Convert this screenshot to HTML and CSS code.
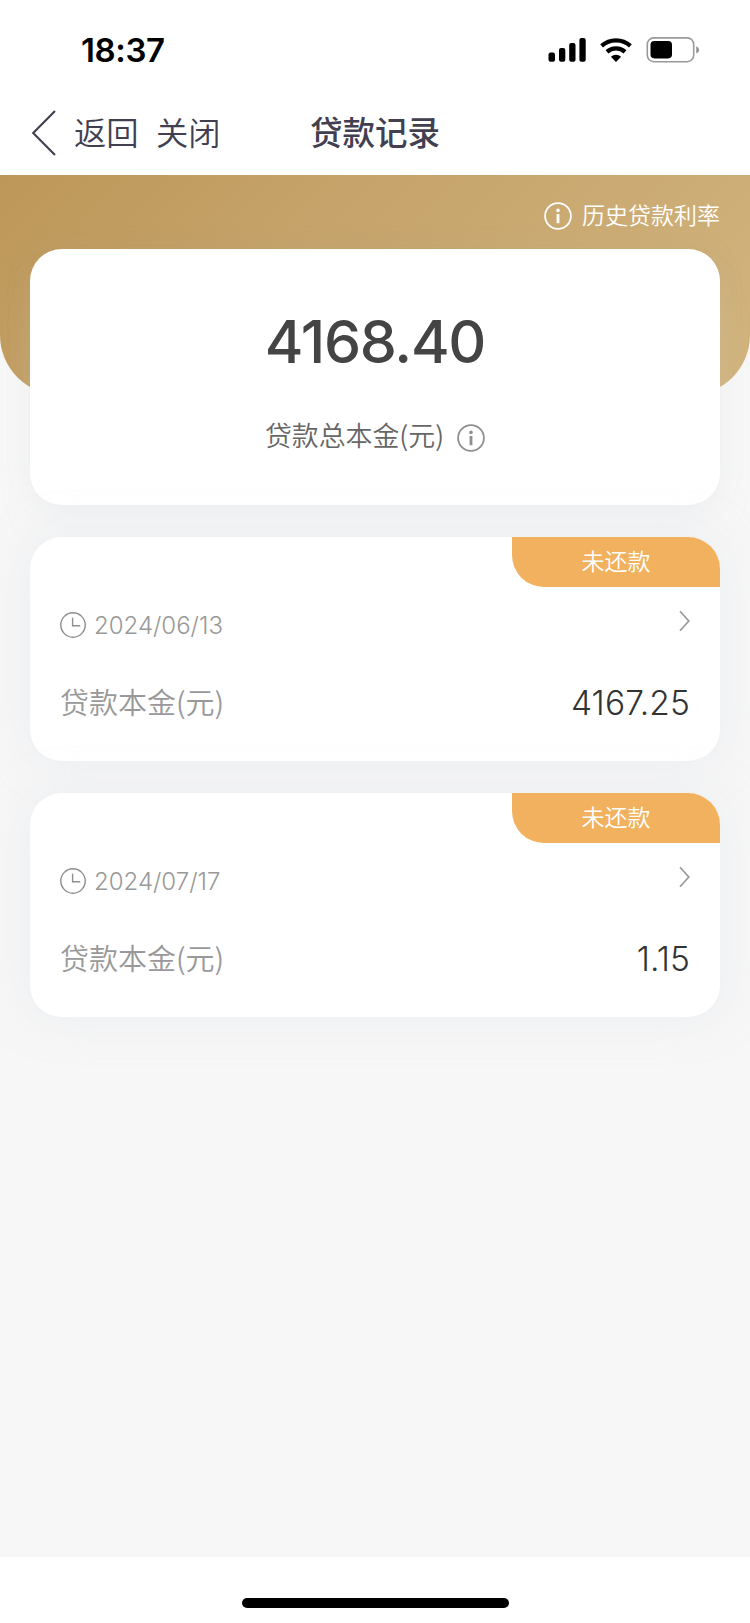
FILE: index.html
```html
<!DOCTYPE html>
<html lang="zh-CN">
<head>
<meta charset="utf-8">
<title>贷款记录</title>
<link rel="stylesheet" href="styles.css">
</head>
<body>
<header class="status">
  <span class="time">18:37</span>
  <svg class="status-icons" width="154" height="28" viewBox="0 0 154 28">
    <rect x="0.5" y="15.5" width="6.5" height="9.2" rx="2"/>
    <rect x="11" y="11" width="6.3" height="13.7" rx="2"/>
    <rect x="21.2" y="6" width="6.3" height="18.7" rx="2"/>
    <rect x="31.4" y="1" width="6.3" height="23.7" rx="2"/>
    <g fill="none" stroke="#000" stroke-width="4.2">
      <path d="M53.6 8.9 A21.5 21.5 0 0 1 82.4 8.9"/>
      <path d="M59 14.9 A13.5 13.5 0 0 1 77 14.9"/>
    </g>
    <path d="M68 24.9 L62.9 19.7 A7.6 7.6 0 0 1 73.1 19.7 Z"/>
    <rect x="99.3" y="0.9" width="46.4" height="23.8" rx="6.5" fill="none" stroke="#999" stroke-width="1.6"/>
    <rect x="102.5" y="4" width="21.5" height="17.4" rx="3.8"/>
    <path d="M148.3 9.2 Q151 10.2 151 12.9 Q151 15.6 148.3 16.6 Z" fill="#888"/>
  </svg>
</header>
<nav class="nav">
  <svg class="back" width="26" height="48" viewBox="0 0 26 48"><path d="M24 2 L2.2 24 L24 46"/></svg>
  <span class="nav-link">返回</span>
  <span class="nav-link">关闭</span>
  <h1 class="title">贷款记录</h1>
</nav>
<main class="content">
  <div class="banner">
    <svg class="info" width="28" height="28" viewBox="0 0 28 28"><circle class="ring" cx="14" cy="14" r="12.9"/><circle class="dot" cx="14" cy="8.4" r="1.8"/><path class="stem" d="M14 12v9.2"/></svg>
    <span>历史贷款利率</span>
  </div>
  <section class="card summary">
    <div class="total">4168.40</div>
    <div class="total-label">
      <span>贷款总本金(元)</span>
      <svg class="info" width="28" height="28" viewBox="0 0 28 28"><circle class="ring" cx="14" cy="14" r="12.9"/><circle class="dot" cx="14" cy="8.4" r="1.8"/><path class="stem" d="M14 12v9.2"/></svg>
    </div>
  </section>
  <section class="card loan">
    <div class="tag">未还款</div>
    <div class="row date-row">
      <svg class="clock" width="26" height="26" viewBox="0 0 26 26"><circle cx="13" cy="13" r="12.2"/><path d="M12.6 5.8v8h7.6"/></svg>
      <span class="date">2024/06/13</span>
      <svg class="chevron" width="11" height="22" viewBox="0 0 11 22"><path d="M1 1.2 L9.8 11 L1 20.8"/></svg>
    </div>
    <div class="row amount-row">
      <span class="label">贷款本金(元)</span>
      <span class="amount">4167.25</span>
    </div>
  </section>
  <section class="card loan">
    <div class="tag">未还款</div>
    <div class="row date-row">
      <svg class="clock" width="26" height="26" viewBox="0 0 26 26"><circle cx="13" cy="13" r="12.2"/><path d="M12.6 5.8v8h7.6"/></svg>
      <span class="date">2024/07/17</span>
      <svg class="chevron" width="11" height="22" viewBox="0 0 11 22"><path d="M1 1.2 L9.8 11 L1 20.8"/></svg>
    </div>
    <div class="row amount-row">
      <span class="label">贷款本金(元)</span>
      <span class="amount">1.15</span>
    </div>
  </section>
</main>
<footer class="home"><div class="home-bar"></div></footer>
</body>
</html>
```
FILE: styles.css
```css
* { box-sizing: border-box; }
body {
  margin: 0;
  height: 1623px;
  display: flex;
  flex-direction: column;
  overflow: hidden;
  background: #fff;
  font-family: Inter, "Noto Sans CJK SC", sans-serif;
}
svg { display: block; flex: none; }
.status {
  height: 91px;
  padding: 37px 48px 0 81px;
  display: flex;
  justify-content: space-between;
}
.time {
  font-size: 33px;
  font-weight: 600;
  line-height: 27px;
  letter-spacing: -0.4px;
}
.nav {
  position: relative;
  height: 84px;
  padding-left: 31px;
  display: flex;
  align-items: center;
  color: #424050;
}
.back { margin-right: 17px; }
.back path { fill: none; stroke: #424050; stroke-width: 2.1; }
.nav-link {
  width: 64px;
  margin-right: 18px;
  padding-top: 2px;
  font-size: 32.3px;
  font-weight: 350;
  line-height: 48px;
  white-space: nowrap;
}
.title {
  position: absolute;
  left: 0;
  right: 0;
  margin: 0;
  padding-top: 2px;
  text-align: center;
  font-size: 32.5px;
  font-weight: 500;
  line-height: 48px;
  pointer-events: none;
}
.content {
  position: relative;
  z-index: 0;
  height: 1382px;
  padding: 0 30px;
  background: #f7f7f7;
}
.content::before {
  content: "";
  position: absolute;
  z-index: -1;
  top: 0;
  left: 0;
  width: 100%;
  height: 220px;
  border-radius: 0 0 60px 60px;
  background: linear-gradient(135deg, #bd9759 0%, #c6a46b 40%, #d2b47e 100%);
}
.banner {
  height: 74px;
  padding-top: 8px;
  display: flex;
  align-items: center;
  justify-content: flex-end;
  gap: 10px;
  color: #fff;
  font-size: 23px;
  font-weight: 350;
  line-height: 34px;
}
.banner span { margin-top: -1px; }
.info .ring { fill: none; stroke: currentColor; stroke-width: 1.8; }
.info .dot { fill: currentColor; }
.info .stem { fill: none; stroke: currentColor; stroke-width: 2.8; }
.card {
  border-radius: 32px;
  background: #fff;
  box-shadow: 0 0 40px rgba(226, 230, 238, 0.5);
}
.summary {
  height: 256px;
  padding-top: 57px;
  color: #666;
  box-shadow: 0 24px 40px -16px rgba(226, 230, 236, 0.35), 0 0 30px rgba(160, 165, 175, 0.07);
}
.total {
  text-align: center;
  color: #444;
  font-size: 59px;
  font-weight: 500;
  line-height: 72px;
  letter-spacing: -1.3px;
}
.total-label {
  height: 40px;
  margin-top: 38px;
  display: flex;
  align-items: center;
  justify-content: center;
  gap: 13px;
  font-family: "Noto Sans CJK SC", sans-serif;
  font-size: 26.9px;
  font-weight: 350;
  line-height: 40px;
}
.total-label span { margin-top: -3px; }
.total-label .info { margin-top: 4px; color: #8f8f8f; }
.loan {
  height: 224px;
  margin-top: 32px;
  padding: 0 30px;
}
.tag {
  width: 208px;
  height: 50px;
  margin: 0 -30px 0 auto;
  border-radius: 0 32px;
  background: #f2b15e;
  color: #fff;
  text-align: center;
  font-size: 23px;
  font-weight: 350;
  line-height: 51px;
}
.row { display: flex; align-items: center; }
.date-row { height: 40px; margin-top: 18px; color: #999; }
.clock { fill: none; stroke: #8e8e8e; stroke-width: 1.4; }
.date {
  flex: 1;
  margin-left: 8px;
  font-size: 24px;
  font-weight: 350;
}
.chevron { margin-top: -8px; fill: none; stroke: #999; stroke-width: 1.7; }
.amount-row { height: 50px; margin-top: 33px; justify-content: space-between; }
.label {
  margin-top: -5px;
  color: #999;
  font-family: "Noto Sans CJK SC", sans-serif;
  font-size: 29px;
  font-weight: 350;
  line-height: 42px;
}
.amount { color: #333; font-size: 33.5px; font-weight: 350; letter-spacing: 0.1px; }
.home { flex: 1; padding-top: 41px; }
.home-bar {
  width: 267px;
  height: 10px;
  margin: 0 auto;
  border-radius: 5px;
  background: #000;
}
```
